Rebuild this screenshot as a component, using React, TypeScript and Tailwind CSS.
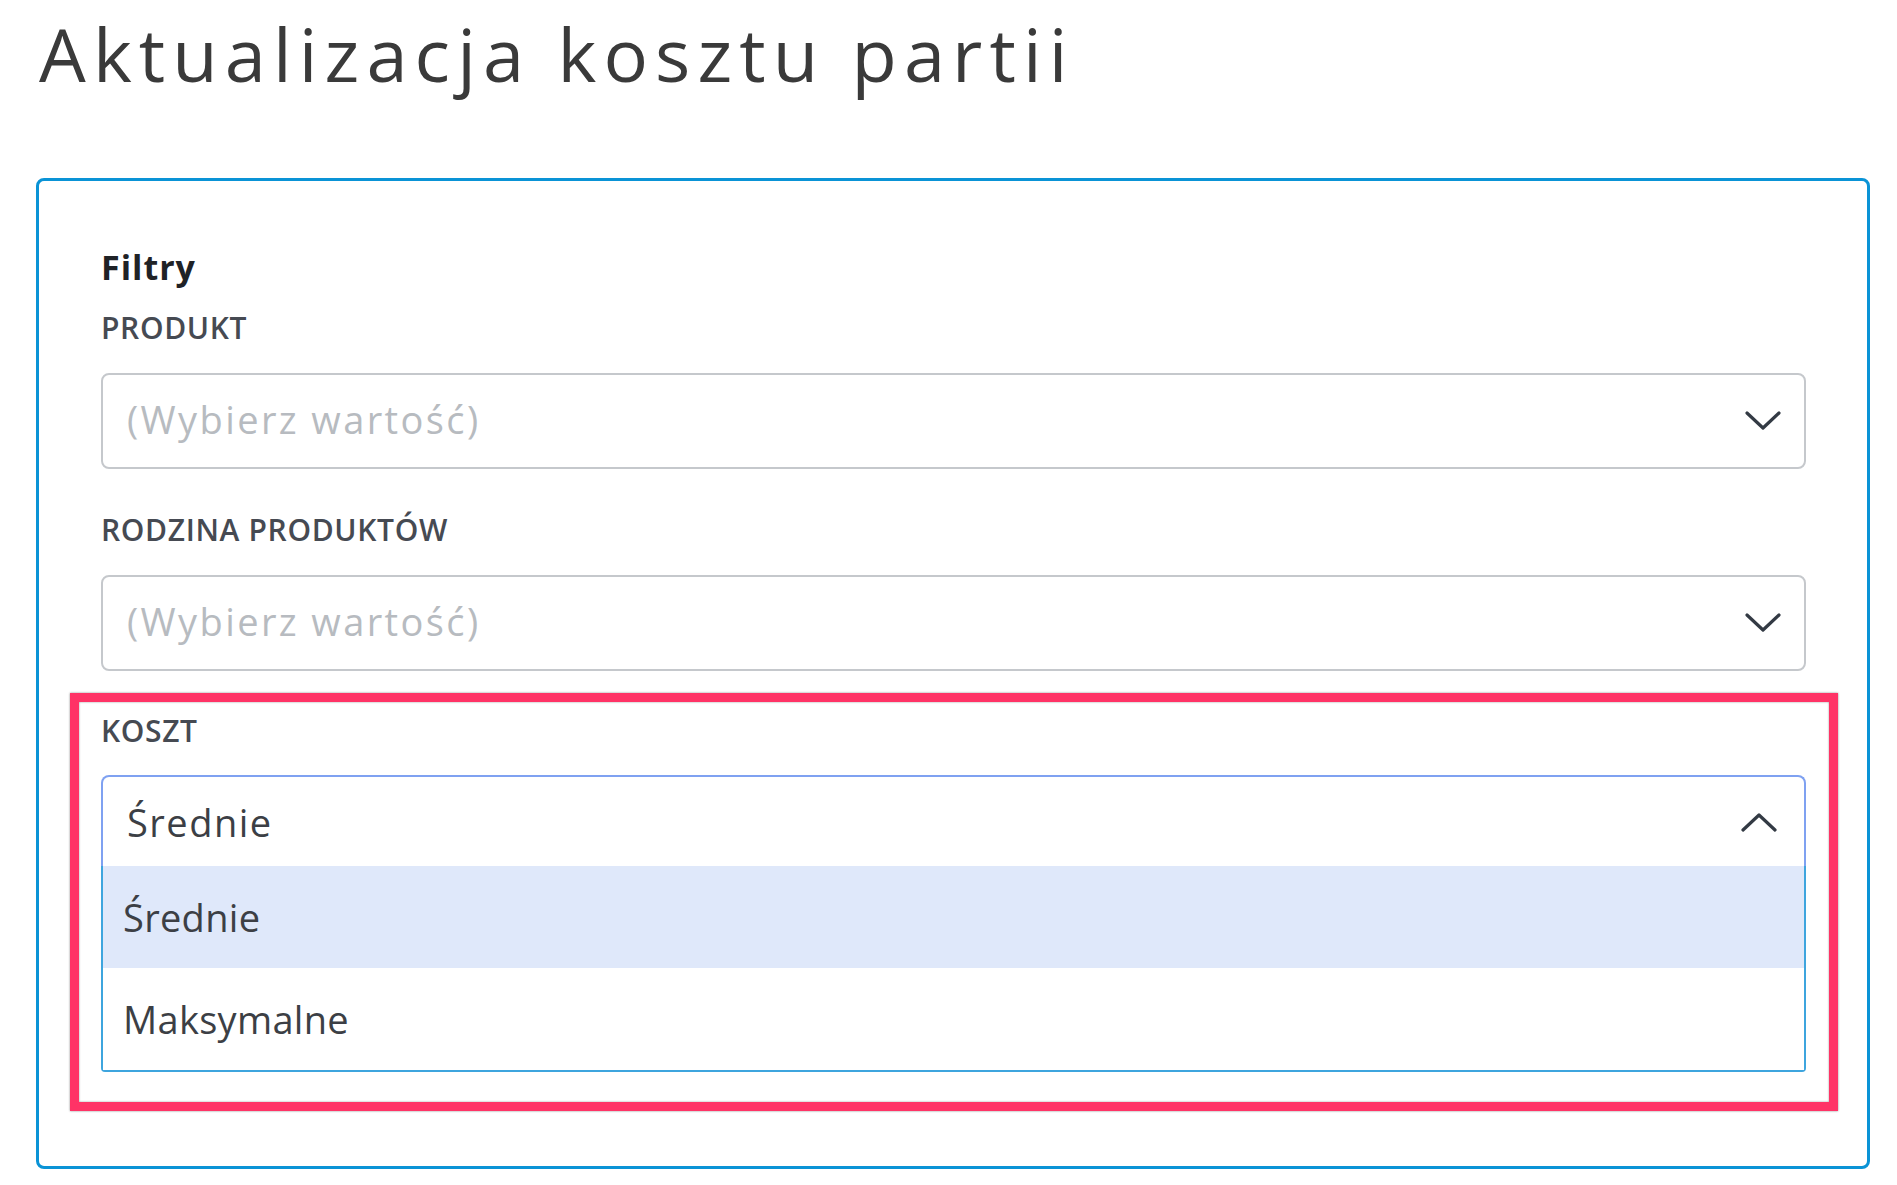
import React from 'react';

function Chevron({ up = false }: { up?: boolean }) {
  return (
    <svg width="36" height="22" viewBox="0 0 36 22" fill="none" className="shrink-0">
      <path
        d={up ? 'M2 19 L18 4 L34 19' : 'M2 3 L18 18 L34 3'}
        stroke="#333a44"
        strokeWidth="3.2"
        strokeLinecap="round"
        strokeLinejoin="round"
      />
    </svg>
  );
}

function FieldLabel({ children }: { children: React.ReactNode }) {
  return (
    <div className="text-[30px] leading-[36px] font-semibold text-[#464a52] tracking-[0.65px]">
      {children}
    </div>
  );
}

function ClosedSelect() {
  return (
    <div className="flex h-[96px] items-center justify-between rounded-[8px] border-2 border-[#c5c8cc] pl-[24px] pr-[23px]">
      <span className="pb-[4px] text-[38px] leading-[48px] tracking-[2.4px] text-[#b7bbc0]">
        (Wybierz wartość)
      </span>
      <Chevron />
    </div>
  );
}

export default function App() {
  const options = ['Średnie', 'Maksymalne'];

  return (
    <div
      className="min-h-[1185px] bg-white pl-[36px] pr-[27px]"
      style={{ fontFamily: '"Open Sans", "Noto Sans", sans-serif' }}
    >
      <h1 className="ml-[3px] pt-[4px] text-[74px] leading-[100px] font-normal tracking-[7.1px] text-[#3a3a3a]">
        Aktualizacja kosztu partii
      </h1>

      <div className="mt-[74px] rounded-[8px] border-[3px] border-[#0a93d6] pt-[66px] pb-[55px] pl-[62px] pr-[61px]">
        <div className="text-[34px] leading-[40px] font-bold tracking-[1px] text-[#1f2226]">Filtry</div>

        <div className="mt-[23px]">
          <FieldLabel>PRODUKT</FieldLabel>
          <div className="mt-[27px]">
            <ClosedSelect />
          </div>
        </div>

        <div className="mt-[43px]">
          <FieldLabel>RODZINA PRODUKTÓW</FieldLabel>
          <div className="mt-[27px]">
            <ClosedSelect />
          </div>
        </div>

        <div className="-ml-[31px] -mr-[32px] mt-[22px] border-[9px] border-[#ff3366] pt-[11px] pb-[30px] pl-[22px] pr-[23px] shadow-[0_0_2px_rgba(0,0,0,0.45),inset_0_0_2px_rgba(0,0,0,0.45)]">
          <FieldLabel>KOSZT</FieldLabel>
          <div className="mt-[26px]">
            <div className="flex h-[91px] items-center justify-between rounded-t-[8px] border-2 border-b-0 border-[#7fa1f1] pl-[24px] pr-[27px]">
              <span className="text-[38px] leading-[48px] tracking-[1.5px] text-[#3c3f45]">Średnie</span>
              <Chevron up />
            </div>
            <div className="rounded-b-[4px] border-2 border-t-0 border-[#3ea5de]">
              {options.map((opt, i) => (
                <div
                  key={opt}
                  className={
                    'flex h-[102px] items-center pl-[20px] text-[38px] leading-[48px] tracking-[0.3px] text-[#3c3f45] ' +
                    (i === 0 ? 'bg-[#dfe8fa]' : 'bg-white')
                  }
                >
                  {opt}
                </div>
              ))}
            </div>
          </div>
        </div>
      </div>
    </div>
  );
}
